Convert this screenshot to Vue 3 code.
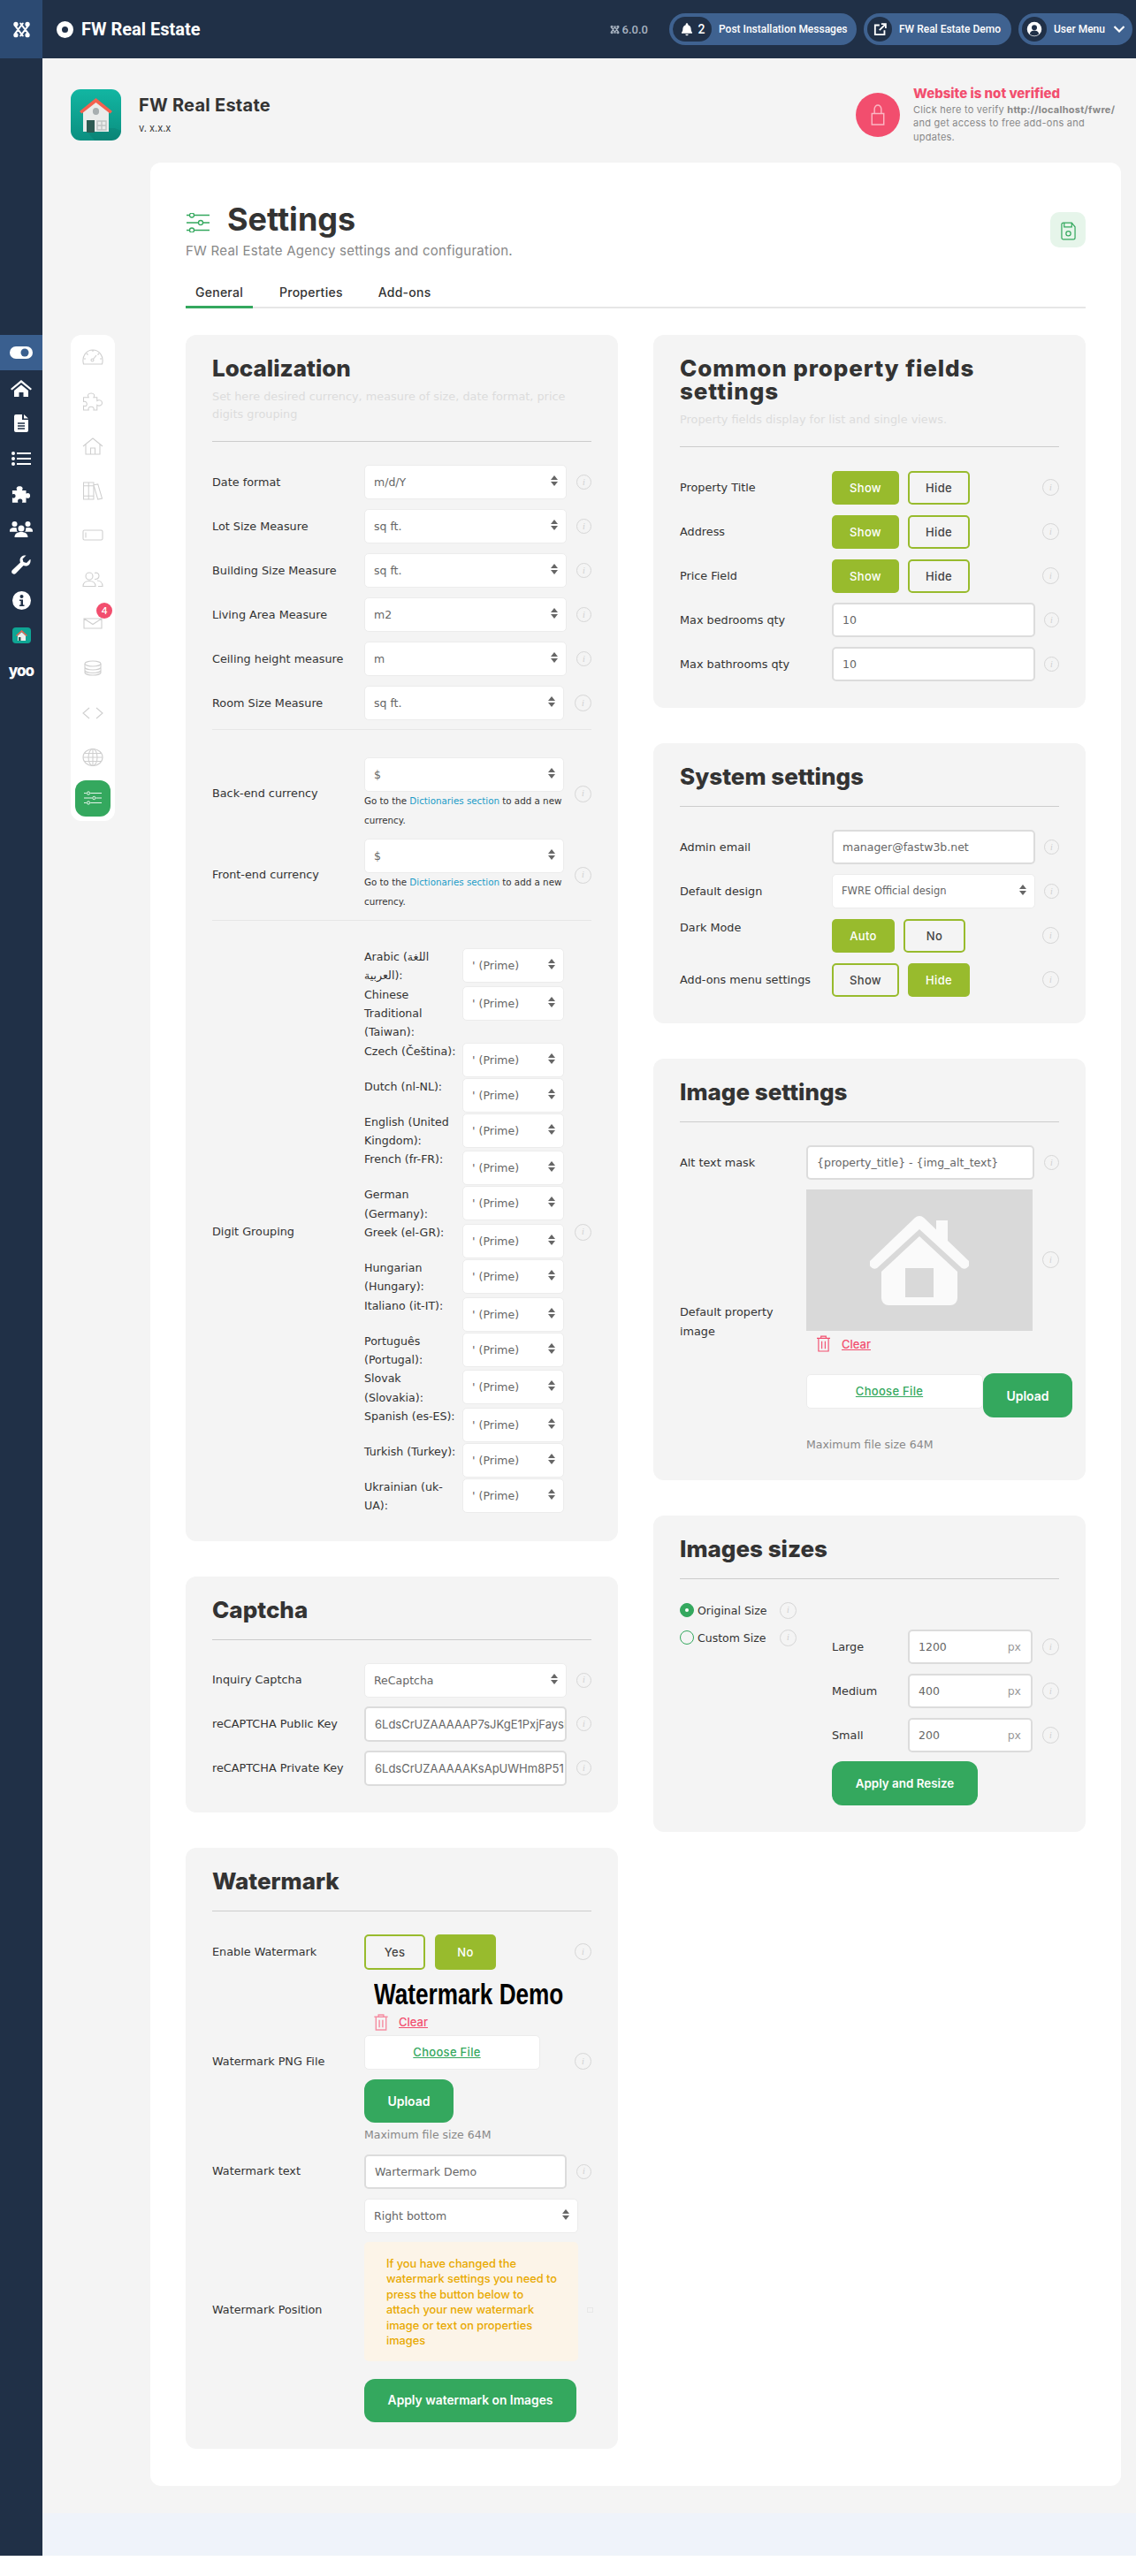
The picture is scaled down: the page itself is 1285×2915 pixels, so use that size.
<script setup>
const navIcons = ['home','doc','list','puzzle','users','wrench','info','fw','yoo']
const panelIcons = ['gauge','puzzle','house','books','card','people','mail','db','code','globe']
const locRows = [
  { l: 'Date format', v: 'm/d/Y' },
  { l: 'Lot Size Measure', v: 'sq ft.' },
  { l: 'Building Size Measure', v: 'sq ft.' },
  { l: 'Living Area Measure', v: 'm2' },
  { l: 'Ceiling height measure', v: 'm' },
  { l: 'Room Size Measure', v: 'sq ft.', short: true },
]
const currencies = ['Back-end currency', 'Front-end currency']
const digits = ['Arabic (اللغة العربية):','Chinese Traditional (Taiwan):','Czech (Čeština):','Dutch (nl-NL):','English (United Kingdom):','French (fr-FR):','German (Germany):','Greek (el-GR):','Hungarian (Hungary):','Italiano (it-IT):','Português (Portugal):','Slovak (Slovakia):','Spanish (es-ES):','Turkish (Turkey):','Ukrainian (uk-UA):']
const toggles = ['Property Title','Address','Price Field']
const sizes = [{l:'Large',v:'1200'},{l:'Medium',v:'400'},{l:'Small',v:'200'}]
const alertLines = ['If you have changed the','watermark settings you need to','press the button below to','attach your new watermark','image or text on properties','images']
</script>

<template>
  <div class="app">
    <header class="top">
      <div class="jlogo">
        <svg viewBox="0 0 24 24" width="21" height="25" fill="none" stroke="#fff" stroke-width="2.300" stroke-linecap="round">
          <path d="M4 7.500L13.500 20M10.500 4L20 16.500M20 7.500L10.500 20M13.500 4L4 16.500" />
          <circle cx="4.500" cy="5" r="3" fill="#fff" stroke="none"/><circle cx="19.500" cy="5" r="3" fill="#fff" stroke="none"/>
          <circle cx="4.500" cy="19" r="3" fill="#fff" stroke="none"/><circle cx="19.500" cy="19" r="3" fill="#fff" stroke="none"/>
        </svg>
      </div>
      <div class="brand">
        <span class="ring"></span>
        <span class="brand-t">FW Real Estate</span>
      </div>
      <div class="top-right">
        <span class="ver">
          <svg viewBox="0 0 24 24" width="11" height="13" fill="none" stroke="#a9b4c2" stroke-width="2.800" stroke-linecap="round"><path d="M4 7.500L13.500 20M10.500 4L20 16.500M20 7.500L10.500 20M13.500 4L4 16.500"/><circle cx="4.500" cy="5" r="2"/><circle cx="19.500" cy="5" r="2"/><circle cx="4.500" cy="19" r="2"/><circle cx="19.500" cy="19" r="2"/></svg>
          6.0.0
        </span>
        <a class="pill p1">
          <span class="pin pin-w">
            <svg viewBox="0 0 24 24" width="16" height="18" fill="#fff"><path d="M12 2a2 2 0 0 1 2 2v.7c3.4 1 5 3.7 5 7.3 0 3 .8 4.300 2 5.500V19H3v-1.500C4.200 16.300 5 15 5 12c0-3.600 1.600-6.300 5-7.300V4a2 2 0 0 1 2-2zM9.500 20.500h5a2.500 2.500 0 0 1-5 0z"/></svg>
            <b>2</b>
          </span>
          Post Installation Messages
        </a>
        <a class="pill p2">
          <span class="pin">
            <svg viewBox="0 0 24 24" width="17" height="17" fill="none" stroke="#fff" stroke-width="2.600"><path d="M11 5H4v15h15v-7M14 3h7v7M21 3L11 13"/></svg>
          </span>
          FW Real Estate Demo
        </a>
        <a class="pill p3">
          <span class="pin">
            <svg viewBox="0 0 24 24" width="18" height="18"><circle cx="12" cy="12" r="11" fill="#fff"/><circle cx="12" cy="9.500" r="4" fill="#203047"/><path d="M5 19c1-4 4-5 7-5s6 1 7 5c-2 2-4.500 3-7 3s-5-1-7-3z" fill="#203047"/></svg>
          </span>
          User Menu
          <svg class="chev" viewBox="0 0 14 10" width="14" height="10" fill="none" stroke="#fff" stroke-width="2.200"><path d="M1.500 2l5.500 5.500L12.500 2"/></svg>
        </a>
      </div>
    </header>

    <div class="shell">
      <nav class="snav">
        <div class="sn act">
          <svg viewBox="0 0 26 14" width="26" height="14"><rect width="26" height="14" rx="7" fill="#fff"/><circle cx="17" cy="7" r="4.500" fill="#3a5f8f"/></svg>
        </div>
        <div class="sn" v-for="n in navIcons" :key="n">
          <svg v-if="n==='home'" viewBox="0 0 24 20" width="24" height="20" fill="#fff"><path d="M12 1L0 11l1.500 1.500L12 4l10.500 8.500L24 11zM4 13v7h5.500v-5h5v5H20v-7l-8-6.500z"/></svg>
          <svg v-else-if="n==='doc'" viewBox="0 0 16 20" width="16" height="20"><path d="M2 0h7v6h7v12a2 2 0 0 1-2 2H2a2 2 0 0 1-2-2V2a2 2 0 0 1 2-2zM11 0l5 4.500h-5z" fill="#fff"/><path d="M4 10h8M4 13h8M4 16h8" stroke="#203047" stroke-width="1.500"/></svg>
          <svg v-else-if="n==='list'" viewBox="0 0 22 16" width="22" height="16" fill="#fff"><circle cx="2" cy="2" r="2"/><circle cx="2" cy="8" r="2"/><circle cx="2" cy="14" r="2"/><rect x="6" y="1" width="16" height="2"/><rect x="6" y="7" width="16" height="2"/><rect x="6" y="13" width="16" height="2"/></svg>
          <svg v-else-if="n==='puzzle'" viewBox="0 0 24 20" width="22" height="19" fill="#fff"><path d="M1 5h6c-2-3 0-5 3-5s5 2 3 5h5v4c3-1.500 5 0 5 2.500s-2 4-5 2.500v6h-5c1.500-3-.5-4.500-2.500-4.500S7 17 8 20H1v-6c3 1.500 4-.5 4-2S4 8.500 1 10z"/></svg>
          <svg v-else-if="n==='users'" viewBox="0 0 26 18" width="26" height="18" fill="#fff"><circle cx="5.500" cy="3" r="3"/><circle cx="20.500" cy="3" r="3"/><circle cx="13" cy="8" r="3.500"/><path d="M0 11c0-3 2-4 5.500-4 1 0 2 .3 2.500 .8-.5 1.500 0 3 1 4H0zM26 11c0-3-2-4-5.500-4-1 0-2 .3-2.500 .8.5 1.500 0 3-1 4h9zM5.500 18c0-4 3-6 7.500-6s7.500 2 7.500 6z"/></svg>
          <svg v-else-if="n==='wrench'" viewBox="0 0 22 22" width="22" height="22" fill="#fff"><path d="M21 5l-4 4-3.500-1L12.500 4.500l4-4C13 0 9.500 2 9.500 6c0 1 .2 1.800 .5 2.500L1 17c-1.500 1.500-.8 3.300 .2 4 1 .8 2.500 1 3.800-.2l8.500-8.800c.7.300 1.500.5 2.500.5 4 0 6-3.500 5.500-7.500z"/></svg>
          <svg v-else-if="n==='info'" viewBox="0 0 21 21" width="21" height="21"><circle cx="10.500" cy="10.500" r="10.500" fill="#fff"/><circle cx="10.500" cy="6" r="2" fill="#203047"/><path d="M8 9.500h4v6h1.500v1.500h-5.500v-1.500h1.500v-4.500h-1.500z" fill="#203047"/></svg>
          <svg v-else-if="n==='fw'" viewBox="0 0 21 18" width="21" height="18"><rect width="21" height="18" rx="4" fill="#0fa594"/><path d="M10.500 3L4 9l1 1 5.500-5 5.500 5 1-1z" fill="#f4614f"/><path d="M6 9.500l4.500-4 4.500 4V15H6z" fill="#eef0ee"/><rect x="7" y="11" width="2.500" height="4" fill="#2e5a52"/></svg>
          <span v-else class="yoo">yoo</span>
        </div>
      </nav>

      <main class="main">
        <section class="head">
          <div class="app-id">
            <svg class="app-logo" viewBox="0 0 57 58" width="57" height="58">
              <defs><linearGradient id="tg" x1="0" y1="0" x2="0" y2="1"><stop offset="0" stop-color="#12b6a2"/><stop offset="1" stop-color="#0b8f80"/></linearGradient></defs>
              <rect width="57" height="58" rx="11" fill="url(#tg)"/>
              <path d="M15 44h35v0l7 3v0a11 11 0 0 1-11 11H27z" fill="#000" opacity=".07"/>
              <path d="M14 23l14.500-11L43 23v25H14z" fill="#eaeceb"/>
              <path d="M10 25L28.500 10 47 25l-2.500 2.500L28.500 15 12.500 27.500z" fill="#f4614f"/>
              <ellipse cx="28.500" cy="25" rx="3.600" ry="4" fill="#a7aeb0"/>
              <rect x="18" y="35" width="9" height="14" fill="#2e5a52"/>
              <path d="M30 36h10v10H30zM35 36v10M30 41h10" fill="none" stroke="#bfc4c4" stroke-width="1.400"/>
            </svg>
            <div>
              <div class="app-t">FW Real Estate</div>
              <div class="app-v">v. x.x.x</div>
            </div>
          </div>
          <div class="verify">
            <span class="lock">
              <svg viewBox="0 0 16 26" width="16" height="25" fill="none" stroke="#fbb6c3" stroke-width="1.500"><path d="M1 11h14v13H1zM4 11V5.500C4 3 6 1 8 1s4 2 4 4.500V11"/></svg>
            </span>
            <div>
              <div class="v-t">Website is not verified</div>
              <div class="v-d"><span>Click here to verify </span><b>http://localhost/fwre/</b><br><span>and get access to free add-ons and</span><br><span>updates.</span></div>
            </div>
          </div>
        </section>

        <div class="content">
          <aside class="panel">
            <div class="pi" v-for="p in panelIcons" :key="p">
              <svg v-if="p==='gauge'" viewBox="0 0 24 18" width="24" height="18" class="pic"><path d="M1.500 17C-1 8 5 1 12 1s13 7 10.500 16zM12 1v2M5 5l1.500 1.500M19 5l-1.500 1.500M2 11h2M20 11h2M12 12l4-5"/><circle cx="11.500" cy="12.500" r="1.500"/></svg>
              <svg v-else-if="p==='puzzle'" viewBox="0 0 24 22" width="24" height="21" class="pic"><path d="M1 6h6C5 3 7 1 10 1s5 2 3 5h4v4c3-2 6 0 6 2.500S20 17 17 15v6h-4c1-3-1-4-3-4s-4 1-3 4H1v-5c3 1 4-.5 4-2S4 10 1 11z"/></svg>
              <svg v-else-if="p==='house'" viewBox="0 0 24 20" width="24" height="20" class="pic"><path d="M1 10L12 1l11 9M4 8v11h16V8M9.500 19v-7h5v7"/></svg>
              <svg v-else-if="p==='books'" viewBox="0 0 24 22" width="24" height="21" class="pic"><path d="M1 1h6v20H1zM7 1h6v20H7zM1 5h6M1 17h6M7 5h6M7 17h6M13 4l5-1 5 17-5 1z"/></svg>
              <svg v-else-if="p==='card'" viewBox="0 0 24 13" width="24" height="13" class="pic"><rect x="1" y="1" width="22" height="11" rx="1.500"/><path d="M4 3.500v6"/></svg>
              <svg v-else-if="p==='people'" viewBox="0 0 24 17" width="24" height="17" class="pic"><circle cx="8" cy="5" r="4"/><path d="M1 16.500c0-4 3-6 7-6s7 2 7 6zM14 1.500c2-1 5 0 5 3s-2 4-5 4M17 10c3 0 6 2 6 6.500h-5"/></svg>
              <span v-else-if="p==='mail'" class="mail">
                <svg viewBox="0 0 22 13" width="22" height="13" class="pic"><path d="M1 1h20v11H1zM1 1l10 6.500L21 1"/></svg>
                <span class="badge">4</span>
              </span>
              <svg v-else-if="p==='db'" viewBox="0 0 20 18" width="20" height="18" class="pic"><ellipse cx="10" cy="4" rx="9" ry="3"/><path d="M1 4v10c0 1.700 4 3 9 3s9-1.300 9-3V4M1 8c0 1.700 4 3 9 3s9-1.300 9-3M1 11.500c0 1.700 4 3 9 3s9-1.300 9-3"/></svg>
              <svg v-else-if="p==='code'" viewBox="0 0 24 14" width="24" height="14" class="pic"><path d="M8 1L1 7l7 6M16 1l7 6-7 6"/></svg>
              <svg v-else viewBox="0 0 24 20" width="24" height="20" class="pic"><ellipse cx="12" cy="10" rx="11" ry="9.500"/><ellipse cx="12" cy="10" rx="5" ry="9.500"/><path d="M1 10h22M2.500 5.500h19M2.500 14.500h19M12 .5v19"/></svg>
            </div>
            <div class="pi-act">
              <svg viewBox="0 0 22 16" width="20" height="16" fill="none" stroke="#fff" stroke-width="1"><path d="M0 2h3M8 2h14M0 8h10M15 8h7M0 14h3M8 14h14"/><circle cx="5.500" cy="2" r="1.800"/><circle cx="12.500" cy="8" r="1.800"/><circle cx="5.500" cy="14" r="1.800"/></svg>
            </div>
          </aside>

          <div class="sheet">
            <div class="s-head">
              <div>
                <div class="s-title">
                  <svg viewBox="0 0 26 22" width="26" height="22" fill="none" stroke="#34a85e" stroke-width="1.300"><path d="M0 2.500h3M9 2.500h17M0 11h13M19 11h7M0 19.500h3M9 19.500h17"/><circle cx="6" cy="2.500" r="2.500"/><circle cx="16" cy="11" r="2.500"/><circle cx="6" cy="19.500" r="2.500"/></svg>
                  <h1>Settings</h1>
                </div>
                <p class="s-sub">FW Real Estate Agency settings and configuration.</p>
              </div>
              <button class="save">
                <svg viewBox="0 0 18 22" width="17" height="21" fill="none" stroke="#34a85e" stroke-width="1.300"><path d="M1 3a2 2 0 0 1 2-2h10l4 5v13a2 2 0 0 1-2 2H3a2 2 0 0 1-2-2zM4 1v5h9V1"/><circle cx="9" cy="14" r="2.800"/></svg>
              </button>
            </div>
            <div class="tabs">
              <span class="tab on">General</span><span class="tab">Properties</span><span class="tab">Add-ons</span>
            </div>

            <div class="cols">
              <div class="col">
                <section class="box">
                  <h2>Localization</h2>
                  <p class="hint">Set here desired currency, measure of size, date format, price digits grouping</p>
                  <hr class="rule">
                  <div class="rows">
                    <div class="row" v-for="r in locRows" :key="r.l">
                      <label class="lb">{{ r.l }}</label>
                      <div class="sel" :class="{ narrow: r.short }">{{ r.v }}</div>
                      <span class="inf" :class="{ big: r.short }"><i>i</i></span>
                    </div>
                  </div>
                  <hr class="thin t1">
                  <div class="row cur" v-for="c in currencies" :key="c">
                    <label class="lb">{{ c }}</label>
                    <div class="cur-c">
                      <div class="sel narrow">$</div>
                      <p class="help"><span>Go to the </span><a>Dictionaries section</a><span> to add a new</span><br><span>currency.</span></p>
                    </div>
                    <span class="inf big"><i>i</i></span>
                  </div>
                  <hr class="thin t2">
                  <div class="row dg">
                    <label class="lb">Digit Grouping</label>
                    <div class="dg-list">
                      <div class="dg-row" v-for="d in digits" :key="d">
                        <span class="dg-l">{{ d }}</span>
                        <div class="sel dg-s"><small>'</small> (Prime)</div>
                      </div>
                    </div>
                    <span class="inf big"><i>i</i></span>
                  </div>
                </section>

                <section class="box">
                  <h2>Captcha</h2>
                  <hr class="rule">
                  <div class="rows">
                    <div class="row"><label class="lb">Inquiry Captcha</label><div class="sel">ReCaptcha</div><span class="inf"><i>i</i></span></div>
                    <div class="row r40"><label class="lb">reCAPTCHA Public Key</label><div class="inp">6LdsCrUZAAAAAP7sJKgE1PxjFaysI</div><span class="inf"><i>i</i></span></div>
                    <div class="row r40"><label class="lb">reCAPTCHA Private Key</label><div class="inp">6LdsCrUZAAAAAKsApUWHm8P51</div><span class="inf"><i>i</i></span></div>
                  </div>
                </section>

                <section class="box">
                  <h2>Watermark</h2>
                  <hr class="rule">
                  <div class="row">
                    <label class="lb">Enable Watermark</label>
                    <div class="btns b-w"><span class="bt out">Yes</span><span class="bt fill">No</span></div>
                    <span class="inf big"><i>i</i></span>
                  </div>
                  <div class="row png">
                    <label class="lb">Watermark PNG File</label>
                    <div class="png-c">
                      <div class="wm-img"><span>Watermark Demo</span></div>
                      <div class="clear c-w">
                        <svg viewBox="0 0 16 20" width="16" height="19" fill="none" stroke="#f58ea2" stroke-width="1.500"><path d="M0 3.500h16M5 3V1h6v2M2 4v15h12V4M6 7v9M10 7v9"/></svg>
                        <a>Clear</a>
                      </div>
                      <div class="choose ch-w"><a>Choose File</a></div>
                      <button class="green up-w">Upload</button>
                      <div class="maxf mf-w">Maximum file size 64M</div>
                    </div>
                    <span class="inf big"><i>i</i></span>
                  </div>
                  <div class="row wt">
                    <label class="lb">Watermark text</label>
                    <div class="inp">Wartermark Demo</div>
                    <span class="inf"><i>i</i></span>
                  </div>
                  <div class="row pos">
                    <label class="lb">Watermark Position</label>
                    <div class="pos-c">
                      <div class="sel wide">Right bottom</div>
                      <div class="alert"><div v-for="a in alertLines" :key="a">{{ a }}</div></div>
                      <button class="green ap-w">Apply watermark on Images</button>
                    </div>
                    <span class="dot"></span>
                  </div>
                </section>
              </div>

              <div class="col">
                <section class="box b-c">
                  <h2>Common property fields settings</h2>
                  <p class="hint">Property fields display for list and single views.</p>
                  <hr class="rule">
                  <div class="rows">
                    <div class="row" v-for="t in toggles" :key="t">
                      <label class="lb">{{ t }}</label>
                      <div class="btns"><span class="bt fill sh">Show</span><span class="bt out hd">Hide</span></div>
                      <span class="inf big"><i>i</i></span>
                    </div>
                    <div class="row"><label class="lb">Max bedrooms qty</label><div class="inp rw">10</div><span class="inf"><i>i</i></span></div>
                    <div class="row"><label class="lb">Max bathrooms qty</label><div class="inp rw">10</div><span class="inf"><i>i</i></span></div>
                  </div>
                </section>

                <section class="box">
                  <h2>System settings</h2>
                  <hr class="rule">
                  <div class="rows">
                    <div class="row"><label class="lb">Admin email</label><div class="inp rw">manager@fastw3b.net</div><span class="inf"><i>i</i></span></div>
                    <div class="row"><label class="lb">Default design</label><div class="sel rw">FWRE Official design</div><span class="inf"><i>i</i></span></div>
                    <div class="row"><label class="lb up9">Dark Mode</label><div class="btns dk"><span class="bt fill au">Auto</span><span class="bt out hd">No</span></div><span class="inf big"><i>i</i></span></div>
                    <div class="row"><label class="lb">Add-ons menu settings</label><div class="btns"><span class="bt out sh">Show</span><span class="bt fill hd">Hide</span></div><span class="inf big"><i>i</i></span></div>
                  </div>
                </section>

                <section class="box">
                  <h2>Image settings</h2>
                  <hr class="rule">
                  <div class="row"><label class="lb lb-i">Alt text mask</label><div class="inp alt">{property_title} - {img_alt_text}</div><span class="inf"><i>i</i></span></div>
                  <div class="row img-r">
                    <label class="lb lb-i">Default property image</label>
                    <div class="img-c">
                      <div class="ph">
                        <svg viewBox="0 0 112 102" width="112" height="102" fill="#fafafa">
                          <path d="M51 3a7 7 0 0 1 10 0l51 49a6 6 0 0 1-8 8L56 16 8 60a6 6 0 0 1-8-8z"/>
                          <path d="M75 6h13v24L75 18z"/>
                          <path fill-rule="evenodd" d="M56 24l43 40v30a8 8 0 0 1-8 8H21a8 8 0 0 1-8-8V64zM40 60v33h32V60z"/>
                        </svg>
                      </div>
                      <div class="clear c-i">
                        <svg viewBox="0 0 16 20" width="15" height="19" fill="none" stroke="#f24e6e" stroke-width="1.200"><path d="M0 3.500h16M5 3V1h6v2M2 4v15h12V4M6 7v9M10 7v9"/></svg>
                        <a>Clear</a>
                      </div>
                      <div class="up-r">
                        <div class="choose ch-i"><a>Choose File</a></div>
                        <button class="green up-i">Upload</button>
                      </div>
                      <div class="maxf mf-i">Maximum file size 64M</div>
                    </div>
                    <span class="inf big inf-i"><i>i</i></span>
                  </div>
                </section>

                <section class="box">
                  <h2>Images sizes</h2>
                  <hr class="rule">
                  <div class="sz">
                    <div class="radios">
                      <div class="rd"><span class="rc on"></span><span class="rt">Original Size</span><span class="inf big"><i>i</i></span></div>
                      <div class="rd"><span class="rc"></span><span class="rt">Custom Size</span><span class="inf big"><i>i</i></span></div>
                    </div>
                    <div class="sz-f">
                      <div class="row" v-for="s in sizes" :key="s.l">
                        <label class="lb sl">{{ s.l }}</label>
                        <div class="inp px"><span>{{ s.v }}</span><em>px</em></div>
                        <span class="inf big"><i>i</i></span>
                      </div>
                      <button class="green ap-r">Apply and Resize</button>
                    </div>
                  </div>
                </section>
              </div>
            </div>
          </div>
        </div>
        <footer class="foot"></footer>
      </main>
    </div>
  </div>
</template>

<style scoped>
.app { width: 1285px; font-family: Inter, "Noto Sans", "DejaVu Sans", sans-serif; color: #333; font-size: 13px; }
p, h1, h2 { margin: 0; }
hr { border: 0; margin: 0; }
a { cursor: pointer; }

.top { height: 66px; background: #203047; display: flex; align-items: center; color: #fff; }
.jlogo { width: 48px; height: 66px; background: #2c4a72; display: flex; align-items: center; justify-content: center; flex: none; }
.brand { display: flex; align-items: center; margin-left: 16px; gap: 9px; }
.ring { width: 19px; height: 19px; border-radius: 50%; border: 6px solid #fff; box-sizing: border-box; }
.brand-t { font: 700 20px Roboto, sans-serif; }
.top-right { margin-left: auto; display: flex; align-items: center; gap: 8px; padding-right: 4px; font: 500 12px Roboto, sans-serif; }
.ver { color: #a9b4c2; font-size: 13px; margin-right: 16px; display: flex; align-items: center; gap: 3px; }
.pill { height: 36px; border-radius: 18px; background: #3f6290; display: flex; align-items: center; padding: 0 4px; color: #fff; box-sizing: border-box; white-space: nowrap; }
.p1 { width: 212px; }
.p2 { width: 167px; }
.p3 { width: 129px; }
.pin { height: 28px; min-width: 28px; border-radius: 14px; background: #203047; display: flex; align-items: center; justify-content: center; margin-right: 8px; flex: none; }
.pin-w { width: 44px; gap: 5px; }
.pin-w b { font-weight: 500; font-size: 14px; }
.chev { margin-left: 9px; }

.shell { display: flex; }
.snav { width: 48px; background: #203047; padding-top: 313px; flex: none; box-sizing: border-box; }
.sn { height: 40px; display: flex; align-items: center; justify-content: center; }
.sn.act { background: #3a5f8f; }
.yoo { color: #fff; font: 800 17px/1 Inter, sans-serif; letter-spacing: -1px; }

.main { width: 1237px; background: #f4f4f4; }
.head { height: 118px; box-sizing: border-box; padding: 35px 17px 25px 32px; display: flex; justify-content: space-between; align-items: center; }
.app-id { display: flex; align-items: center; gap: 20px; }
.app-logo { display: block; }
.app-t { font: 700 20px/24px Inter, sans-serif; letter-spacing: .25px; color: #333; }
.app-v { font-size: 11px; line-height: 16px; margin-top: 6px; color: #333; }
.verify { display: flex; align-items: center; gap: 15px; width: 300px; }
.lock { width: 50px; height: 50px; border-radius: 50%; background: #f24e6e; display: flex; align-items: center; justify-content: center; flex: none; }
.v-t { color: #f24e6e; font-weight: 800; font-size: 15px; line-height: 18px; }
.v-d { color: #888; font-size: 11px; line-height: 15.5px; margin-top: 2px; letter-spacing: .25px; }
.v-d b { font-weight: 700; }

.content { display: flex; padding: 0 17px 0 32px; gap: 40px; align-items: flex-start; }
.panel { width: 50px; margin-top: 195px; background: #fff; border-radius: 12px; height: 550px; box-sizing: border-box; padding-top: 0; flex: none; display: flex; flex-direction: column; align-items: center; }
.pi { height: 50.300px; display: flex; align-items: center; justify-content: center; flex: none; }
.pic { fill: none; stroke: #cfcfcf; stroke-width: 1.100; display: block; }
.mail { position: relative; display: block; }
.badge { position: absolute; top: -17px; right: -11px; width: 18px; height: 18px; border-radius: 50%; background: #f24e6e; color: #fff; font-size: 11px; font-weight: 500; text-align: center; line-height: 18px; }
.pi-act { width: 40px; height: 41px; border-radius: 12px; background: #34a85e; display: flex; align-items: center; justify-content: center; margin-top: 1px; }

.sheet { width: 1098px; background: #fff; border-radius: 12px; padding: 46px 40px 42px; box-sizing: border-box; margin-bottom: 31px; }
.s-head { display: flex; justify-content: space-between; align-items: flex-start; }
.s-title { display: flex; align-items: center; height: 36px; padding-left: 1px; gap: 20px; }
.s-title svg { margin-top: 8px; }
h1 { font: 700 36px/36px Inter, sans-serif; color: #333; }
.s-sub { font-size: 15px; line-height: 20px; color: #888; margin-top: 8px; letter-spacing: .25px; }
.save { width: 40px; height: 40px; margin-top: 10px; border: 0; border-radius: 10px; background: #e6f5ea; padding: 2px 0 0; display: flex; align-items: center; justify-content: center; }
.tabs { display: flex; gap: 20px; margin-top: 20px; height: 35px; border-bottom: 2px solid #e6e6e6; box-sizing: border-box; }
.tab { padding: 0 10px; height: 35px; box-sizing: border-box; line-height: 34px; font-size: 14px; font-weight: 500; color: #333; letter-spacing: .25px; }
.tab.on { border-bottom: 3px solid #34a85e; width: 76px; text-align: center; padding: 0; }

.cols { display: grid; grid-template-columns: 489px 489px; gap: 40px; margin-top: 30px; }
.col { display: flex; flex-direction: column; gap: 40px; }
.box { background: #f4f4f4; border-radius: 12px; padding: 25px 30px 30px; }
h2 { font: 800 26px/26px Inter, sans-serif; color: #333; }
.b-c h2 { width: 345px; letter-spacing: .9px; }
.hint { font: 12.850px/20px "DejaVu Sans", sans-serif; color: #dcdcdc; margin-top: 9px; }
.rule { height: 1px; background: #cccccc; margin: 20px 0 26px; }
.thin { height: 1px; background: #e6e6e6; }
.t1 { margin: 10px 0 31px; }
.t2 { margin: 10px 0 31px; }

.rows { display: flex; flex-direction: column; gap: 11px; }
.row { display: flex; align-items: center; min-height: 39px; }
.r40 { margin-top: -1px; }
.lb { width: 172px; flex: none; font: 12.800px/22px "DejaVu Sans", sans-serif; color: #333; }
.lb-i { width: 143px; padding-right: 20px; box-sizing: border-box; }
.up9 { position: relative; top: -9px; }
.sel, .inp { height: 39px; box-sizing: border-box; border-radius: 5px; background: #fff; font: 12.500px "DejaVu Sans", sans-serif; color: #666; line-height: 37px; padding: 0 10px; width: 229px; flex: none; white-space: nowrap; overflow: hidden; }
.sel { border: 1px solid #ececec; position: relative; }
.sel::before, .sel::after { content: ""; position: absolute; right: 9px; border-left: 4px solid transparent; border-right: 4px solid transparent; }
.sel::before { top: 11px; border-bottom: 5px solid #666; }
.sel::after { top: 18px; border-top: 5px solid #666; }
.inp { border: 2px solid #dcdcdc; line-height: 35px; }
.r40 .inp { height: 40px; line-height: 36px; padding-right: 8px; font: 13px/36px Inter, sans-serif; }
.narrow { width: 226px; }
.wide { width: 242px; }
.rw { width: 230px; }
.sel.rw { font-size: 11.500px; }
.inf { margin-left: auto; width: 17px; height: 17px; border: 1.500px solid #d6d6d6; border-radius: 50%; box-sizing: border-box; display: flex; align-items: center; justify-content: center; flex: none; color: #cfcfcf; font: italic 10px/1 "Liberation Serif", serif; }
.inf i { display: block; }
.inf.big { width: 19px; height: 19px; }

.cur { align-items: center; margin-bottom: 10px; }
.cur:last-of-type { margin-bottom: 0; }
.cur-c { width: 226px; }
.help { font: 10.300px/21.500px "DejaVu Sans", sans-serif; color: #333; height: 43px; white-space: nowrap; }
.help a { color: #1a9bc7; }
.dg { align-items: center; margin-bottom: -2px; }
.dg-list { width: 226px; flex: none; }
.dg-row { display: flex; min-height: 40px; }
.dg-l { width: 111px; flex: none; font: 12.600px/21.330px "DejaVu Sans", sans-serif; color: #333; position: relative; top: -1px; }
.dg-s { width: 115px; padding-left: 10px; }
.dg-s small { font-size: 13px; color: #666; }

.btns { display: flex; gap: 10px; flex: none; }
.bt { height: 38px; box-sizing: border-box; border-radius: 5px; font-size: 13px; font-weight: 500; text-align: center; line-height: 38px; letter-spacing: .3px; }
.fill { background: #98bb2d; color: #fff; }
.out { border: 2px solid #98bb2d; line-height: 34px; color: #444; }
.sh { width: 76px; }
.hd { width: 70px; }
.au { width: 71px; }
.b-w .bt { width: 69px; height: 40px; }
.b-w .fill { line-height: 40px; }
.b-w .out { line-height: 36px; margin-right: 1px; }

.png { margin-top: 8px; }
.png-c { width: 229px; }
.wm-img { height: 38px; display: flex; align-items: center; padding-left: 11px; color: #000; white-space: nowrap; }
.wm-img span { font: 700 34px/38px "Liberation Sans", sans-serif; transform: scaleX(.77); transform-origin: left center; }
.clear { display: flex; align-items: center; height: 19px; color: #f24e6e; font-weight: 500; font-size: 13px; }
.clear a { text-decoration: underline; }
.c-w { margin-top: 4px; padding-left: 11px; gap: 12px; }
.c-i { margin-top: 5px; padding-left: 12px; gap: 13px; }
.choose { height: 39px; background: #fff; border: 1px solid #ececec; border-radius: 5px; box-sizing: border-box; color: #34a85e; font-weight: 500; font-size: 13px; line-height: 37px; text-align: center; letter-spacing: .3px; padding-right: 12px; }
.choose a { text-decoration: underline; }
.ch-w { width: 199px; margin-top: 5px; }
.ch-i { width: 200px; margin-top: 1px; }
.green { border: 0; background: #34a85e; color: #fff; font: 600 14px Inter, sans-serif; border-radius: 12px; height: 49px; display: block; padding: 0; }
.up-w { width: 101px; margin-top: 11px; }
.maxf { color: #888; font: 12.500px/20px "DejaVu Sans", sans-serif; }
.mf-w { margin-top: 4px; height: 23px; }
.wt { margin-top: 9px; }
.pos { margin-top: 11px; }
.pos-c { width: 242px; }
.alert { margin-top: 10px; height: 135px; box-sizing: border-box; padding: 16px 10px 16px 25px; background: #fcf4e8; border-radius: 5px; color: #e8a900; font-size: 12.800px; font-weight: 500; line-height: 17.500px; white-space: nowrap; }
.ap-w { width: 240px; margin-top: 20px; font-size: 13.800px; }
.dot { margin-left: auto; margin-right: -2px; width: 5px; height: 4px; border: 1px solid #e8e8e8; }

.alt { width: 258px; padding-left: 10px; }
.img-r { margin-top: 11px; align-items: center; }
.img-c { width: 258px; flex: none; height: 299px; }
.ph { width: 256px; height: 160px; background: #d9d9d9; display: flex; align-items: center; justify-content: center; padding-top: 0; }
.up-r { display: flex; margin-top: 24px; width: 301px; }
.up-i { width: 101px; height: 50px; flex: none; }
.mf-i { margin-top: 21px; }
.inf-i { align-self: flex-start; margin-top: 70px; }

.sz { display: flex; }
.radios { width: 172px; flex: none; display: flex; flex-direction: column; gap: 13px; }
.rd { display: flex; align-items: center; height: 18px; }
.rd .inf { margin-left: 0; }
.rc { width: 16px; height: 16px; border-radius: 50%; border: 1px solid #34a85e; box-sizing: border-box; flex: none; background: transparent; }
.rc.on { background: #34a85e; position: relative; }
.rc.on::after { content: ""; position: absolute; left: 5px; top: 5px; width: 4px; height: 4px; border-radius: 50%; background: #fff; }
.rt { margin-left: 4px; width: 93px; font: 12.500px "DejaVu Sans", sans-serif; flex: none; white-space: nowrap; }
.sz-f { flex: 1; padding-top: 31px; display: flex; flex-direction: column; gap: 11px; }
.sl { width: 86px; }
.px { width: 141px; display: flex; justify-content: space-between; padding-right: 11px; }
.px em { font-style: normal; color: #999; }
.ap-r { width: 165px; height: 50px; margin-top: -1px; font-size: 13.400px; }
.foot { height: 48px; background: #eff3fa; }
</style>

<style>
html, body { margin: 0; background: #fff; }
</style>
